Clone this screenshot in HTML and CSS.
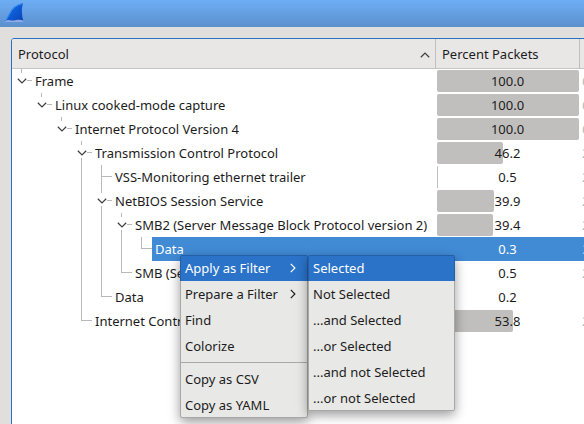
FILE: index.html
```html
<!DOCTYPE html>
<html lang="en">
<head>
<meta charset="utf-8">
<title>Protocol Hierarchy Statistics</title>
<link rel="stylesheet" href="styles.css">
</head>
<body>
<svg class="defs" width="0" height="0">
  <symbol id="down" viewBox="0 0 10 6"><path d="M.8 .8 5 4.9 9.2 .8" fill="none" stroke="#404040" stroke-width="1.3"/></symbol>
  <symbol id="right" viewBox="0 0 6 10"><path d="M.8 .8 4.9 5 .8 9.2" fill="none" stroke="currentColor" stroke-width="1.2"/></symbol>
</svg>
<header class="titlebar">
  <svg class="fin" width="20" height="20" viewBox="0 0 20 20">
    <defs><linearGradient id="g" x1="0" y1="0" x2="1" y2="1"><stop offset="0" stop-color="#1b7ae8"/><stop offset=".5" stop-color="#0e5bd6"/><stop offset="1" stop-color="#0a44b4"/></linearGradient></defs>
    <path d="M0 18.500Q2 15 4 11Q8 2 18 0Q15.500 9 18.500 18.500Z" fill="url(#g)"/>
    <path d="M0 18.500Q2 16.500 5 17.200T11 17T18.500 17.500L18.500 19H0Z" fill="#8fa9e6"/>
    <path d="M.8 17.500Q2.500 15 4.500 11Q8.500 2.500 17.500 .5" fill="none" stroke="#3d98f8" stroke-width=".9"/>
  </svg>
</header>
<main class="table">
  <div class="head">
    <div class="th protocol">Protocol<svg width="10" height="6" class="sort"><use href="#down"/></svg></div>
    <div class="th percent">Percent Packets</div>
    <div class="th"></div>
  </div>
  <div class="body" id="body"></div>
</main>
<nav class="menu first">
  <div class="item active">Apply as Filter<svg width="6" height="10"><use href="#right"/></svg></div>
  <div class="item">Prepare a Filter<svg width="6" height="10"><use href="#right"/></svg></div>
  <div class="item">Find</div>
  <div class="item">Colorize</div>
  <hr>
  <div class="item">Copy as CSV</div>
  <div class="item">Copy as YAML</div>
</nav>
<nav class="menu second">
  <div class="item active">Selected</div>
  <div class="item">Not Selected</div>
  <div class="item">...and Selected</div>
  <div class="item">...or Selected</div>
  <div class="item">...and not Selected</div>
  <div class="item">...or not Selected</div>
</nav>
<script src="tree.js"></script>
</body>
</html>
```
FILE: styles.css
```css
* { box-sizing: border-box; }
body {
  margin: 0;
  width: 584px;
  height: 424px;
  overflow: hidden;
  position: relative;
  background: #e0dfdd;
  color: #1c1c1c;
  font: 13px/24px "Noto Sans", sans-serif;
}
.defs { position: absolute; }
.titlebar {
  height: 27px;
  padding: 3px 0 0 5px;
  background: linear-gradient(#6eaef5, #5b90cd);
}
.fin { display: block; }
.table {
  margin: 11px 0 0 11px;
  width: 600px;
  height: 400px;
  border: 1px solid #2a6fc4;
  border-radius: 3px 0 0 0;
  background: #fff;
}
.head, .row { display: grid; grid-template-columns: 424px 144px 1fr; }
.head {
  height: 30px;
  background: #e8e7e6;
  border-bottom: 1px solid #c6c5c4;
  border-radius: 2px 0 0 0;
}
.th { height: 29px; line-height: 31px; padding-left: 6px; border-right: 1px solid #c0bfbe; }
.protocol { display: flex; align-items: center; justify-content: space-between; padding: 2px 5px 0 6px; line-height: 29px; }
.sort { transform: rotate(180deg); }
.row { height: 24px; }
.name { display: flex; }
.label { flex: 1; padding-left: 3px; white-space: nowrap; }
.row.selected .label, .row.selected .value, .row.selected .next { background: #418bd5; color: #fff; }
.row.selected .next { color: #8dbbe8; }
.cell { width: 20px; height: 24px; display: grid; grid-template-columns: 9px 1px 10px; flex: none; }
.cell i { grid-column: 2; grid-row: 1; background: #b9b9b9; height: 24px; display: none; }
.cell b { grid-column: 3; grid-row: 1; background: #b9b9b9; height: 1px; margin-top: 11px; display: none; }
.cell svg { grid-column: 1 / 4; grid-row: 1; margin: 9px 0 0 5px; }
.line i, .tee i, .end i, .open i, .tee b, .end b, .open b { display: block; }
.end i { height: 12px; }
.open i { height: 4px; }
.open b { margin-left: 5px; }
.open.more i { height: 24px; background: linear-gradient(#b9b9b9 4px, transparent 4px 17px, #b9b9b9 17px); }
.value { display: grid; padding: 1px; }
.bar { grid-area: 1 / 1; height: 22px; background: #c0bfbd; border-radius: 2px; }
.num { grid-area: 1 / 1; text-align: center; line-height: 22px; padding-right: 1px; }
.next { padding-left: 2px; color: #bbb; }
.menu {
  position: absolute;
  top: 255px;
  background: #e8e8e6;
  border: 1px solid #a8a8a8;
  border-radius: 2px;
  box-shadow: 0 4px 12px rgba(0, 0, 0, .4);
}
.first { left: 180px; width: 128px; }
.second { left: 308px; width: 147px; }
.item {
  height: 26px;
  padding: 0 11px 0 4px;
  line-height: 26px;
  display: flex;
  align-items: center;
  justify-content: space-between;
  white-space: nowrap;
}
.item:last-child { margin-bottom: -1px; }
.item.active {
  margin: -1px -1px 0;
  padding: 0 11px 1px 4px;
  border: solid #235fa8;
  border-width: 1px 1px 0;
  border-radius: 2px 2px 0 0;
  background: #2a73c9;
  color: #fff;
  line-height: 24px;
}
.menu hr { margin: 3px 0; border: 0; height: 1px; background: #a8a8a8; }
```
FILE: tree.js
```js
// Each row: guide cells, label, percentage, first digit of the following column.
// n = blank, v = line, t = tee, e = end, o = open, m = open with siblings below
const rows = [
  ["o", "Frame", 100.0, "6"],
  ["no", "Linux cooked-mode capture", 100.0, "6"],
  ["nno", "Internet Protocol Version 4", 100.0, "6"],
  ["nnnm", "Transmission Control Protocol", 46.2, "2"],
  ["nnnvt", "VSS-Monitoring ethernet trailer", 0.5, "2"],
  ["nnnvm", "NetBIOS Session Service", 39.9, "2"],
  ["nnnvvm", "SMB2 (Server Message Block Protocol version 2)", 39.4, "2"],
  ["nnnvvve", "Data", 0.3, "2", "selected"],
  ["nnnvve", "SMB (Server Message Block Protocol)", 0.5, "2"],
  ["nnnve", "Data", 0.2, ""],
  ["nnne", "Internet Control Message Protocol", 53.8, "2"]
];
const kinds = { n: "", v: "line", t: "tee", e: "end", o: "open", m: "open more" };
document.getElementById("body").innerHTML = rows.map(([guides, label, pct, next, state = ""]) => {
  const cells = [...guides].map(k =>
    `<span class="cell ${kinds[k]}"><i></i><b></b>${"om".includes(k) ? '<svg width="10" height="6"><use href="#down"/></svg>' : ""}</span>`).join("");
  const bar = state ? "" : `<span class="bar" style="width:${pct}%"></span>`;
  return `<div class="row ${state}"><div class="name">${cells}<span class="label">${label}</span></div>` +
    `<div class="value">${bar}<span class="num">${pct.toFixed(1)}</span></div><div class="next">${next}</div></div>`;
}).join("");
```
